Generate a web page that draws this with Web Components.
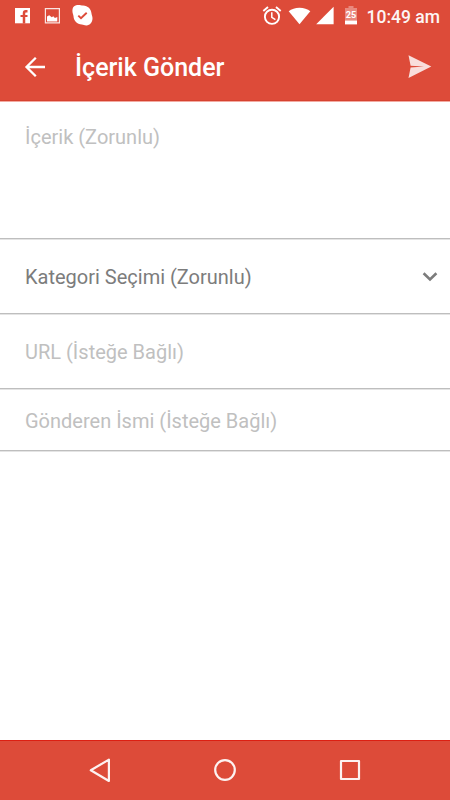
<!DOCTYPE html>
<html lang="tr">
<head>
<meta charset="utf-8">
<title>İçerik Gönder</title>
<style>
html,body{margin:0;height:100%;background:#fff}
body{font-family:Roboto,"Liberation Sans",sans-serif;overflow:hidden}
</style>
</head>
<body>
<submit-screen></submit-screen>
<script>
function define(name, html){
  customElements.define(name, class extends HTMLElement{
    constructor(){
      super();
      const t=document.createElement('template');
      t.innerHTML=html;
      this.attachShadow({mode:'open'}).append(t.content.cloneNode(true));
    }
  });
}

define('status-bar', `
<style>
:host{display:flex;align-items:center;height:33px;box-sizing:border-box;padding:0 10px 0 14px;color:#fff;background:#dd4b39}
svg{display:block;flex:none}
.gap{flex:1}
.fb{margin-right:13px}.pic{margin-right:12px}
.alarm{margin-right:6px}.wifi{margin-right:5px}.cell{margin-right:11px}.bat{margin-right:10px}
time{font-size:17.500px;line-height:33px;padding-top:1px;font-weight:500;white-space:nowrap;opacity:.95}
</style>
<svg class="fb" width="17" height="33" viewBox="0 0 17 33"><path fill="#fff" d="M1 8h15v15.300H1z"/><path fill="none" stroke="#dd4b39" stroke-width="2.500" d="M13.500 11.200h-1.700c-1.200 0-1.800.7-1.800 2v10.200"/><path stroke="#dd4b39" stroke-width="2" d="M6.500 16h7"/></svg>
<svg class="pic" width="16" height="33" viewBox="0 0 16 33"><path fill="none" stroke="#fff" stroke-opacity=".85" stroke-width="1.200" d="M1.400 8.700h14v14.200h-14z"/><path fill="#fff" d="M3 21.400v-4.800l2.200-1.300 2.600 2 1.500-1 1.600 1.600 2.400-.8v4.300z"/></svg>
<svg class="skype" width="22" height="33" viewBox="0 0 22 33"><path fill="#fff" d="M3.500 5.500C7 4.500 9 5.600 11 5.600c5 .2 8 3.400 8.500 8 .1 1.500 1 2.700 1 4.600 0 4-2.500 7-6 7.200-2 .1-3-.8-4.700-.9-4.800-.4-8-3.600-8.300-8.300C1.400 14.500.3 13 .4 10.500c.1-2.400 1-4.400 3.100-5z"/><path fill="none" stroke="#dd4b39" stroke-width="1.900" d="m6.300 15.600 2.700 2.600 5.700-5.400"/></svg>
<span class="gap"></span>
<svg class="alarm" width="20" height="33" viewBox="0 0 20 33"><g fill="none" stroke="#fff"><circle cx="10" cy="16.800" r="7.100" stroke-width="1.900"/><path stroke-width="1.500" d="M9.800 12.200v5.200l3.600 2.200"/><path stroke-width="1.900" d="M1.300 11 6 7.100M18.700 11 14 7.100"/></g></svg>
<svg class="wifi" width="23" height="33" viewBox="0 0 23 33"><path fill="#fff" d="M.7 11.200C3.500 9 7.200 7.700 11.500 7.700s8 1.300 10.800 3.500L11.500 24.200z"/></svg>
<svg class="cell" width="18" height="33" viewBox="0 0 18 33"><path fill="#fff" d="M17.600 6.700V24.200H.2z"/></svg>
<svg class="bat" width="12" height="33" viewBox="0 0 12 33"><path fill="#fff" fill-opacity=".35" d="M0 8h3.500V6h5v2H12v12H0z"/><path fill="#fff" d="M0 20.400h12v4H0z"/><text x="6" y="18.300" text-anchor="middle" textLength="10.500" lengthAdjust="spacingAndGlyphs" font-family="Roboto" font-weight="700" font-size="9" fill="#fff">25</text></svg>
<time>10:49 am</time>`);

define('app-bar', `
<style>
:host{display:flex;align-items:center;height:68px;box-sizing:border-box;padding:0 18px 0 24px;background:#dd4b39;color:#fff;border-bottom:1px solid #d64230;box-shadow:0 1px 0 #f3aaa1}
svg{display:block;flex:none}
h1{margin:0 auto 0 30px;padding-top:2px;font-size:25px;line-height:32px;font-weight:500;white-space:nowrap}
</style>
<svg width="21" height="22" viewBox="0 0 21 22"><path fill="none" stroke="#fff" stroke-width="2.300" d="M21 11H3M11.800 1.700 2.500 11l9.300 9.300"/></svg>
<h1><slot></slot></h1>
<svg width="24" height="24" viewBox="0 0 24 24"><path fill="#fff" fill-opacity=".82" d="M.5.300 23.300 11.500.5 22.900 2.600 12.500 16 11.600 2.600 10.700z"/></svg>`);

define('form-row', `
<style>
:host{display:flex;align-items:center;justify-content:space-between;box-sizing:border-box;padding:2px 12px 0 25px;border-bottom:1px solid #bebebe;box-shadow:0 1px 0 #e4e4e4;color:#c0c0c0;font-size:20px;line-height:24px;white-space:nowrap}
</style>
<span><slot></slot></span><slot name="icon"></slot>`);

define('nav-bar', `
<style>
:host{display:flex;align-items:center;justify-content:space-between;height:60px;box-sizing:border-box;padding:0 88px 1px;background:#dd4b39;border-top:1px solid #dc1f12}
svg{display:block}
path,circle,rect{fill:none;stroke:#fff;stroke-opacity:.93;stroke-width:2.200;stroke-linejoin:round}
</style>
<svg width="24" height="26" viewBox="0 0 24 26"><path d="M20.900 2.600v21.400L2.800 13.300z"/></svg>
<svg width="24" height="26" viewBox="0 0 24 26"><circle cx="12" cy="13" r="9.800"/></svg>
<svg width="24" height="26" viewBox="0 0 24 26"><rect x="3" y="4" width="18" height="18"/></svg>`);

define('submit-screen', `
<style>
:host{display:flex;flex-direction:column;height:800px;width:450px;background:#fff}
main{flex:1;display:flex;flex-direction:column}
.content{height:138px;align-items:flex-start;padding-top:24px}
.category{height:75px;color:#7c7c7c}
.url{height:75px}
.sender{height:62px}
svg{display:block}
</style>
<status-bar></status-bar>
<app-bar>İçerik Gönder</app-bar>
<main>
<form-row class="content">İçerik (Zorunlu)</form-row>
<form-row class="category">Kategori Seçimi (Zorunlu)<svg slot="icon" width="16" height="10" viewBox="0 0 16 10"><path fill="none" stroke="#7c7c7c" stroke-width="2.600" d="m1.600 1.200 6.400 6.300 6.400-6.300"/></svg></form-row>
<form-row class="url">URL (İsteğe Bağlı)</form-row>
<form-row class="sender">Gönderen İsmi (İsteğe Bağlı)</form-row>
</main>
<nav-bar></nav-bar>`);
</script>
</body>
</html>
